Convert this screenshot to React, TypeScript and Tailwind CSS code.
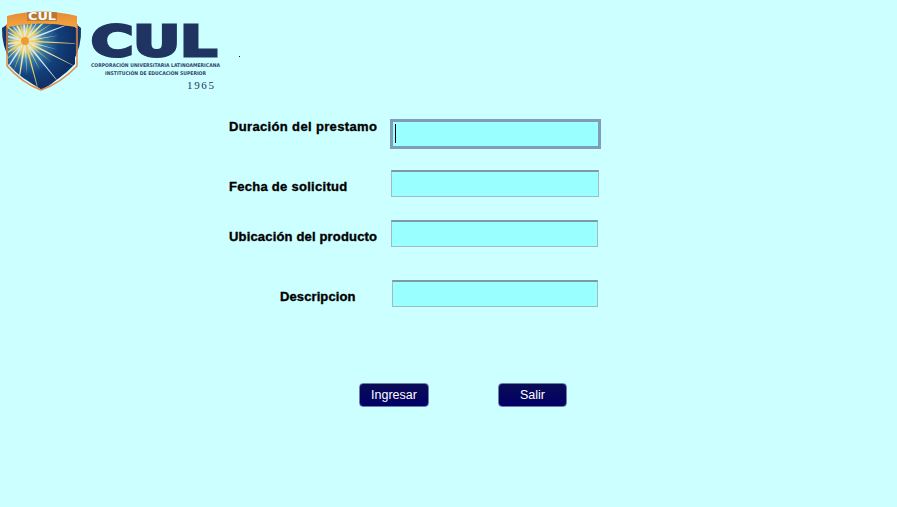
const RAYS = Array.from({ length: 30 }, (_, i) => {
  const a = (i / 30) * Math.PI * 2 + 0.05
  const long = i % 2 === 0
  const len = long ? 64 : 34
  const w = long ? 1.1 : 0.8
  const nx = -Math.sin(a) * w
  const ny = Math.cos(a) * w
  return {
    points: `${25 + nx},${41 + ny} ${25 - nx},${41 - ny} ${25 + Math.cos(a) * len},${41 + Math.sin(a) * len}`,
    color: i % 3 === 0 ? '#f0cf5c' : i % 3 === 1 ? '#d6e8f0' : '#f5e6a0',
  }
})

function Logo() {
  return (
    <svg width="250" height="100" viewBox="0 0 250 100" className="block shrink-0">
      <defs>
        <radialGradient id="sol" gradientUnits="userSpaceOnUse" cx="25" cy="41" r="62">
          <stop offset="0" stopColor="#f5a030" />
          <stop offset="0.14" stopColor="#eadf9f" />
          <stop offset="0.3" stopColor="#3a80ab" />
          <stop offset="0.55" stopColor="#12407c" />
          <stop offset="1" stopColor="#0b2250" />
        </radialGradient>
        <linearGradient id="banda" x1="0" y1="0" x2="0" y2="1">
          <stop offset="0" stopColor="#e58a35" />
          <stop offset="1" stopColor="#f7a63e" />
        </linearGradient>
        <clipPath id="escudo">
          <path d="M8 27 Q41 20 75 27 L75 64 Q60 80 41 88 Q22 80 8 64 Z" />
        </clipPath>
      </defs>
      <path d="M2 28 L8 24 L76 24 L81 28 Q83 66 42 90 Q1 66 2 28 Z" fill="#123768" />
      <path d="M7 24 L7 66 Q22 83 41 90 Q61 83 77 66 L77 24" fill="none" stroke="#e8874a" strokeWidth="1.5" />
      <path d="M7 16 Q41 7 77 16 L77 28 Q41 20 7 28 Z" fill="url(#banda)" />
      <g clipPath="url(#escudo)">
        <rect x="0" y="15" width="85" height="80" fill="url(#sol)" />
        {RAYS.map((r, i) => (
          <polygon key={i} points={r.points} fill={r.color} />
        ))}
        <circle cx="25" cy="41" r="4" fill="#f09a30" />
      </g>
      <rect x="27" y="12" width="30" height="9" fill="#7a5a34" opacity="0.45" />
      <text x="28" y="20" textLength="28" lengthAdjust="spacingAndGlyphs" fontFamily="DejaVu Sans, sans-serif" fontWeight="700" fontSize="10" fill="#fff">CUL</text>
      <text x="91" y="56" textLength="126" lengthAdjust="spacingAndGlyphs" fontFamily="DejaVu Sans, sans-serif" fontWeight="700" fontSize="42" stroke="#1f3460" strokeWidth="3" strokeLinejoin="miter" fill="#1f3460">CUL</text>
      <text x="91" y="67" textLength="129" lengthAdjust="spacingAndGlyphs" fontFamily="DejaVu Sans, sans-serif" fontWeight="700" fontSize="5" fill="#33456c">CORPORACIÓN UNIVERSITARIA LATINOAMERICANA</text>
      <text x="105" y="75" textLength="101" lengthAdjust="spacingAndGlyphs" fontFamily="DejaVu Sans, sans-serif" fontWeight="700" fontSize="5" fill="#33456c">INSTITUCIÓN DE EDUCACIÓN SUPERIOR</text>
      <text x="187" y="89" textLength="27" fontFamily="Liberation Serif, serif" fontSize="11" fill="#24365c">1965</text>
      <rect x="239" y="56" width="1" height="1" fill="#111" />
    </svg>
  )
}

export default function App() {
  return (
    <div className="min-h-[507px] bg-[#ccffff] font-['Liberation_Sans',Arial,sans-serif]">
      <Logo />

      <div className="pt-[19px] pl-[229px]">
        <div className="flex items-start h-[30px]">
          <label className="w-[161px] shrink-0 text-[13px] leading-[16px] font-bold tracking-[0.35px] [-webkit-text-stroke:0.35px_#000] text-black">
            Duración del prestamo
          </label>
          <div className="relative">
            <input className="block w-[211px] h-[30px] bg-[#99ffff] border-[3px] border-[#7f9db9] outline-none" />
            <span className="absolute left-[5px] top-[5px] h-[19px] w-px bg-black" />
          </div>
        </div>

        <div className="flex items-center h-[27px] mt-[21px]">
          <label className="w-[162px] shrink-0 pt-[6px] text-[13px] leading-[16px] font-bold tracking-[0.28px] [-webkit-text-stroke:0.35px_#000] text-black">
            Fecha de solicitud
          </label>
          <input className="block w-[208px] h-[27px] bg-[#99ffff] border border-[#9fbcc4] border-t-2 border-t-[#7d9aa5] outline-none" />
        </div>

        <div className="flex items-center h-[27px] mt-[23px]">
          <label className="w-[162px] shrink-0 pt-[6px] text-[13px] leading-[16px] font-bold tracking-[0.17px] [-webkit-text-stroke:0.35px_#000] text-black">
            Ubicación del producto
          </label>
          <input className="block w-[207px] h-[27px] bg-[#99ffff] border border-[#9fbcc4] border-t-2 border-t-[#7d9aa5] outline-none" />
        </div>

        <div className="flex items-center h-[27px] mt-[33px]">
          <label className="w-[163px] shrink-0 pt-[6px] pl-[51px] text-[13px] leading-[16px] font-bold tracking-[0.1px] [-webkit-text-stroke:0.35px_#000] text-black">
            Descripcion
          </label>
          <input className="block w-[206px] h-[27px] bg-[#99ffff] border border-[#9fbcc4] border-t-2 border-t-[#7d9aa5] outline-none" />
        </div>
      </div>

      <div className="flex pt-[76px] pl-[359px] gap-[69px]">
        <button className="w-[70px] h-[24px] rounded-[4px] border border-[#6f7fa8] bg-gradient-to-b from-[#0b0b55] to-[#000066] text-[12.5px] text-white">
          Ingresar
        </button>
        <button className="w-[69px] h-[24px] rounded-[4px] border border-[#6f7fa8] bg-gradient-to-b from-[#0b0b55] to-[#000066] text-[12.5px] text-white">
          Salir
        </button>
      </div>
    </div>
  )
}
